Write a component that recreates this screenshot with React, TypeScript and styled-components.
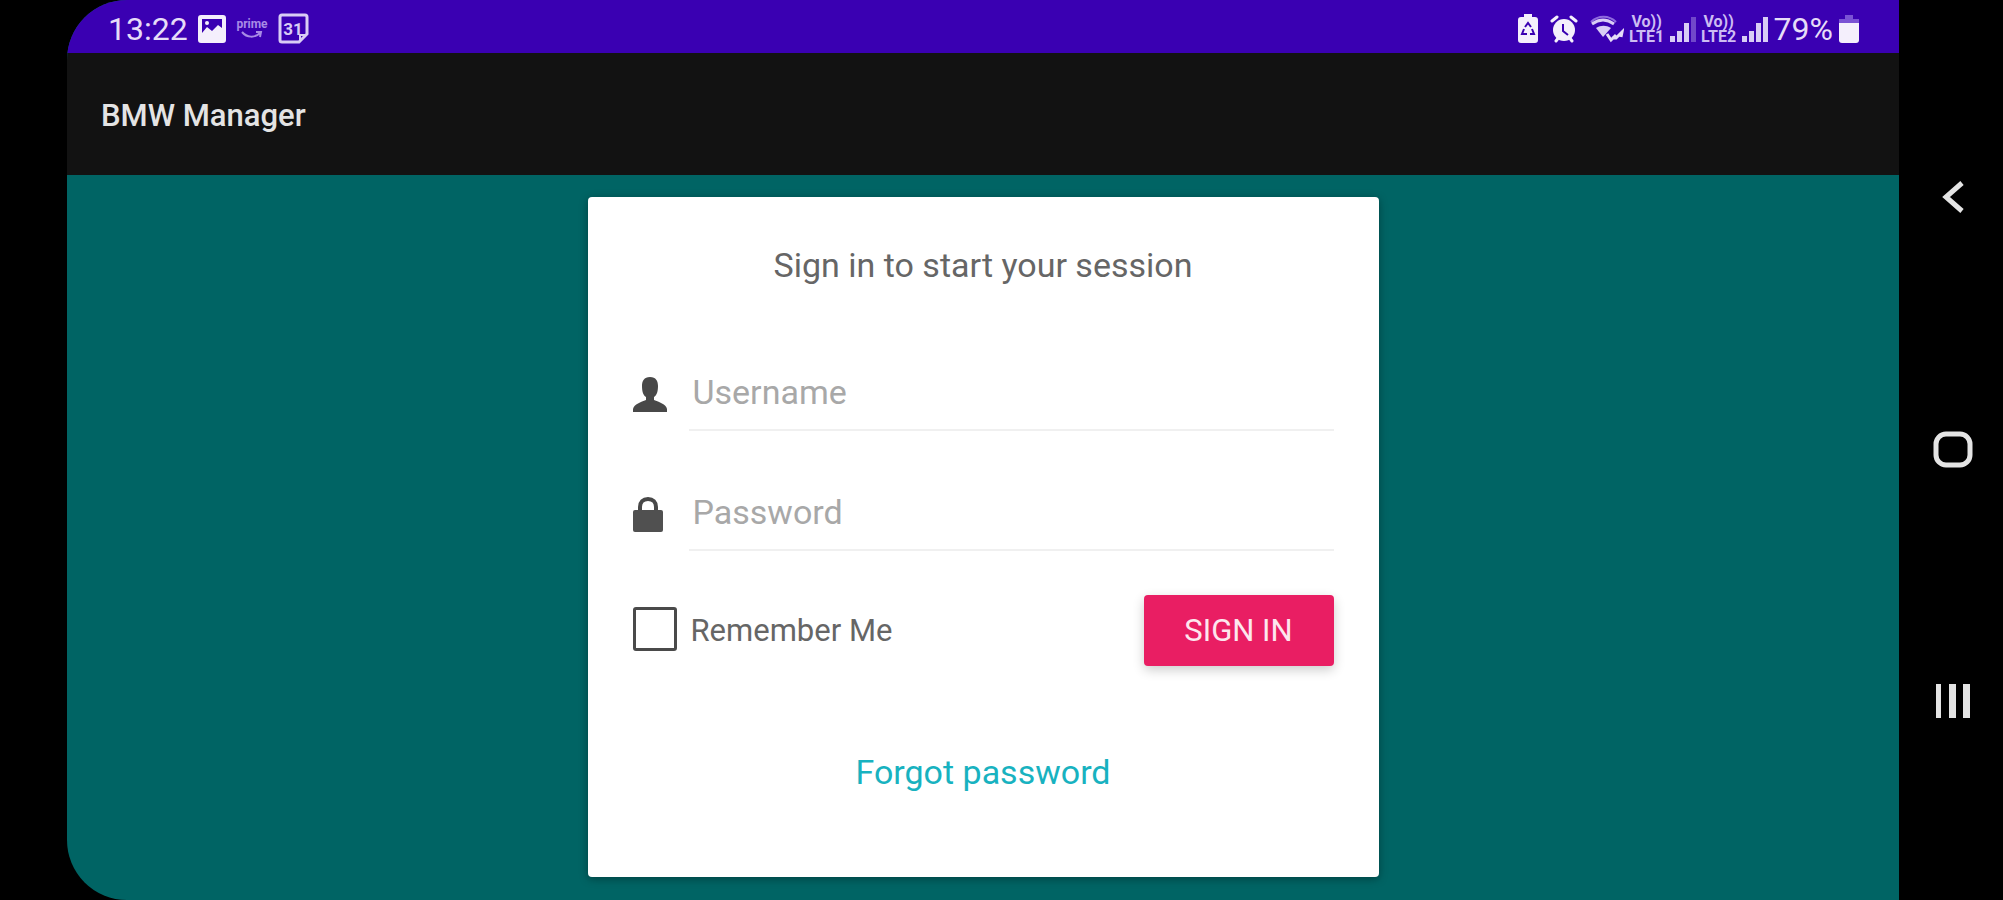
import React from "react";
import styled, { createGlobalStyle } from "styled-components";

const GlobalStyle = createGlobalStyle`
  *, *::before, *::after { box-sizing: border-box; }
  body { margin: 0; background: #000; font-family: Roboto, "Liberation Sans", sans-serif; }
`;

const Device = styled.div`
  display: flex;
  min-height: 100vh;
  padding-left: 67px;
  background: #000;
`;

const Screen = styled.div`
  flex: 1;
  display: flex;
  flex-direction: column;
  overflow: hidden;
  border-radius: 60px 0 0 60px;
  background: #006464;
`;

const StatusBar = styled.div`
  display: flex;
  align-items: center;
  justify-content: space-between;
  height: 53px;
  padding: 4px 40px 0 41px;
  background: #3a00b2;
  color: #e6dcf8;
`;

const StatusGroup = styled.div<{ $gap: number }>`
  display: flex;
  align-items: center;
  gap: ${(p) => p.$gap}px;
`;

const StatusText = styled.span`
  font-size: 32px;
  line-height: 40px;
`;

const Glyph = styled.svg`
  display: block;
  flex: none;
`;

const GlyphText = styled.text`
  font-family: Roboto, "Liberation Sans", sans-serif;
  font-weight: 700;
  text-anchor: middle;
  stroke: none;
`;

const Carrier = styled.span`
  display: flex;
  flex-direction: column;
  align-items: center;
  width: 34px;
  font-size: 16px;
  font-weight: 700;
  line-height: 15px;
  color: #cdbcf2;
`;

const AppBar = styled.header`
  display: flex;
  align-items: center;
  height: 122px;
  padding: 4px 34px 0;
  background: #121212;
`;

const AppTitle = styled.h1`
  margin: 0;
  color: #e4e4e4;
  font-size: 31px;
  font-weight: 500;
  line-height: 40px;
`;

const Content = styled.main`
  flex: 1;
  display: flex;
  justify-content: center;
  align-items: flex-start;
  padding: 22px 20px;
`;

const Card = styled.form`
  display: flex;
  flex-direction: column;
  width: 100%;
  max-width: 791px;
  padding: 48px 45px 85px;
  border-radius: 4px;
  background: #fff;
  box-shadow: 0 2px 8px rgba(0, 0, 0, 0.35);
`;

const Prompt = styled.p`
  margin: 0 0 84px;
  color: #666;
  font-size: 34px;
  line-height: 40px;
  text-align: center;
`;

const Field = styled.label`
  display: flex;
  align-items: center;
  gap: 22px;
  margin-bottom: 58px;
`;

const FieldIcon = styled.span`
  padding-bottom: 12px;
`;

const FieldInput = styled.input`
  flex: 1;
  min-width: 0;
  height: 62px;
  padding: 0 4px 14px;
  border: 0;
  border-bottom: 2px solid #f0f0f0;
  outline: 0;
  background: none;
  color: #555;
  font-family: inherit;
  font-size: 34px;
  &::placeholder { color: #a8a8a8; opacity: 1; }
`;

const Actions = styled.div`
  display: flex;
  align-items: center;
  justify-content: space-between;
  margin: -14px 0 86px;
`;

const Remember = styled.label`
  display: flex;
  align-items: center;
  gap: 14px;
  color: #666;
  font-size: 31px;
  line-height: 40px;
`;

const Checkbox = styled.input`
  appearance: none;
  width: 44px;
  height: 44px;
  margin: 0 0 4px;
  border: 3px solid #4a4a4a;
  border-radius: 3px;
  background: #fff;
  &:checked { background: #4a4a4a; }
`;

const SignInButton = styled.button`
  width: 190px;
  height: 71px;
  padding: 0;
  border: 0;
  border-radius: 4px;
  background: #e91e63;
  box-shadow: 0 4px 12px rgba(0, 0, 0, 0.2);
  color: #fde6ee;
  font-family: inherit;
  font-size: 31px;
`;

const ForgotLink = styled.a`
  align-self: center;
  color: #18b2c0;
  font-size: 34px;
  line-height: 40px;
  text-decoration: none;
`;

const NavBar = styled.nav`
  display: flex;
  flex-direction: column;
  align-items: center;
  justify-content: space-between;
  width: 104px;
  padding: 173px 0 175px 4px;
`;

const NavButton = styled.button`
  display: grid;
  place-items: center;
  width: 48px;
  height: 48px;
  padding: 0;
  border: 0;
  background: none;
  color: #e4e4e4;
`;

const PictureIcon = () => (
  <Glyph width="28" height="28" viewBox="0 0 28 28" aria-hidden="true">
    <path fill="#f4effc" fillRule="evenodd" d="M3 0h22a3 3 0 0 1 3 3v22a3 3 0 0 1-3 3H3a3 3 0 0 1-3-3V3a3 3 0 0 1 3-3zm1 4v14l5-6 5 4 6-6 4 3V4z" />
    <circle cx="9" cy="8" r="2" fill="#f4effc" />
  </Glyph>
);

const PrimeIcon = () => (
  <Glyph width="32" height="24" viewBox="0 0 32 24" fill="#a88be6" aria-hidden="true">
    <GlyphText x="16" y="11" fontSize="12">prime</GlyphText>
    <path fill="none" stroke="#a88be6" strokeWidth="2" d="M6 15c5 6 13 6 18 1M20 15l5 0-1 5" />
  </Glyph>
);

const CalendarIcon = () => (
  <Glyph width="31" height="31" viewBox="0 0 31 31" fill="#d9cdf5" stroke="#d9cdf5" aria-hidden="true">
    <path fill="none" strokeWidth="3" d="M4 2h23a2 2 0 0 1 2 2v17l-8 8H4a2 2 0 0 1-2-2V4a2 2 0 0 1 2-2z" />
    <path fill="none" strokeWidth="2" d="M22 28v-6h6" />
    <GlyphText x="15" y="22" fontSize="17">31</GlyphText>
  </Glyph>
);

const SaverIcon = () => (
  <Glyph width="20" height="29" viewBox="0 0 20 29" aria-hidden="true">
    <path fill="#f4effc" d="M6 0h8v3h3a3 3 0 0 1 3 3v20a3 3 0 0 1-3 3H3a3 3 0 0 1-3-3V6a3 3 0 0 1 3-3h3z" />
    <path fill="none" stroke="#3a00b2" strokeWidth="2" d="M7 13l3-4 3 4M14 15l2 5h-4M9 20H4l2-5" />
  </Glyph>
);

const AlarmIcon = () => (
  <Glyph width="28" height="28" viewBox="0 0 28 28" fill="none" aria-hidden="true">
    <path stroke="#f4effc" strokeWidth="3" strokeLinecap="round" d="M2 6l5-4M26 6l-5-4M6 26l3-4M22 26l-3-4" />
    <circle cx="14" cy="15" r="11" fill="#f4effc" />
    <path stroke="#3a00b2" strokeWidth="2" d="M13 9v7l5 4" />
  </Glyph>
);

const WifiIcon = () => (
  <Glyph width="34" height="28" viewBox="0 0 34 28" fill="none" aria-hidden="true">
    <path stroke="#8f6bde" strokeWidth="2" d="M1 7c7-7 18-7 25 0" />
    <path stroke="#d9cdf5" strokeWidth="3" d="M2 9c7-5 15-5 22 0" />
    <path fill="#d9cdf5" d="M6 13c5-3 10-3 15 0l-8 9z" />
    <path stroke="#e6dcf8" strokeWidth="3" d="M17 19l4 6 5-5M22 23h4l6-6-1 5" />
  </Glyph>
);

const SignalIcon = ({ full }: { full?: boolean }) => (
  <Glyph width="26" height="26" viewBox="0 0 26 26" fill="#d9cdf5" aria-hidden="true">
    <path d="M0 20h5v6H0zM7 15h5v11H7zM14 7h5v19h-5z" />
    <path d="M21 1h5v25h-5z" opacity={full ? 1 : 0.35} />
  </Glyph>
);

const BatteryIcon = () => (
  <Glyph width="20" height="29" viewBox="0 0 20 29" aria-hidden="true">
    <path fill="#7a52d4" d="M6 1h8v4h6v6H0V5h6z" />
    <path fill="#f4effc" d="M0 9h20v17a3 3 0 0 1-3 3H3a3 3 0 0 1-3-3z" />
  </Glyph>
);

const PersonIcon = () => (
  <Glyph width="34" height="35" viewBox="0 0 34 35" fill="#484848" aria-hidden="true">
    <path d="M17 0c6 0 8 4 8 9 0 5-1 9-4 11v3c5 2 12 4 13 9v3H0v-3c1-5 8-7 13-9v-3c-3-2-4-6-4-11 0-5 2-9 8-9z" />
  </Glyph>
);

const LockIcon = () => (
  <Glyph width="34" height="35" viewBox="0 0 34 35" aria-hidden="true">
    <path fill="none" stroke="#484848" strokeWidth="4" d="M7 15V10c0-5 3-8 8-8s8 3 8 8v5" />
    <rect y="13" width="30" height="22" rx="2" fill="#505050" />
  </Glyph>
);

export default function App() {
  return (
    <>
      <GlobalStyle />
      <Device>
        <Screen>
          <StatusBar>
            <StatusGroup $gap={10}>
              <StatusText>13:22</StatusText>
              <PictureIcon />
              <PrimeIcon />
              <CalendarIcon />
            </StatusGroup>
            <StatusGroup $gap={6}>
              <StatusGroup $gap={12}>
                <SaverIcon />
                <AlarmIcon />
                <WifiIcon />
              </StatusGroup>
              <Carrier><span>Vo))</span><span>LTE1</span></Carrier>
              <SignalIcon />
              <Carrier><span>Vo))</span><span>LTE2</span></Carrier>
              <SignalIcon full />
              <StatusText>79%</StatusText>
              <BatteryIcon />
            </StatusGroup>
          </StatusBar>
          <AppBar>
            <AppTitle>BMW Manager</AppTitle>
          </AppBar>
          <Content>
            <Card onSubmit={(e) => e.preventDefault()}>
              <Prompt>Sign in to start your session</Prompt>
              <Field>
                <FieldIcon><PersonIcon /></FieldIcon>
                <FieldInput type="text" placeholder="Username" aria-label="Username" />
              </Field>
              <Field>
                <FieldIcon><LockIcon /></FieldIcon>
                <FieldInput type="password" placeholder="Password" aria-label="Password" />
              </Field>
              <Actions>
                <Remember>
                  <Checkbox type="checkbox" />
                  Remember Me
                </Remember>
                <SignInButton type="submit">SIGN IN</SignInButton>
              </Actions>
              <ForgotLink href="#forgot">Forgot password</ForgotLink>
            </Card>
          </Content>
        </Screen>
        <NavBar aria-label="System navigation">
          <NavButton type="button" aria-label="Back">
            <Glyph width="24" height="34" viewBox="0 0 24 34" fill="none" stroke="currentColor" strokeWidth="5">
              <path d="M21 3L5 17l16 14" />
            </Glyph>
          </NavButton>
          <NavButton type="button" aria-label="Home">
            <Glyph width="40" height="37" viewBox="0 0 40 37" fill="none" stroke="currentColor" strokeWidth="5">
              <rect x="3" y="3" width="34" height="31" rx="10" />
            </Glyph>
          </NavButton>
          <NavButton type="button" aria-label="Recent apps">
            <Glyph width="34" height="34" viewBox="0 0 34 34" fill="currentColor">
              <path d="M0 0h5v34H0zM13 0h7v34h-7zM27 0h7v34h-7z" />
            </Glyph>
          </NavButton>
        </NavBar>
      </Device>
    </>
  );
}
